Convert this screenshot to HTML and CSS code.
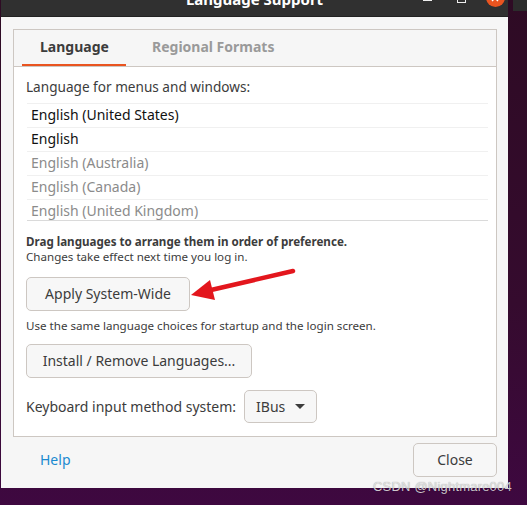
FILE: index.html
```html
<!DOCTYPE html>
<html>
<head>
<meta charset="utf-8">
<link rel="stylesheet" href="styles.css">
</head>
<body>
<div class="window">
  <div class="titlebar">
    <div class="titlebar-inner">
      <div></div>
      <div class="title">Language Support</div>
      <div class="controls">
        <span class="ctl"><span class="min"></span></span>
        <span class="ctl"><span class="max"></span></span>
        <span class="ctl"><span class="close"><svg width="18" height="18" viewBox="0 0 18 18"><path d="M6 6 L12 12 M12 6 L6 12" stroke="#fff" stroke-width="1.4" fill="none"/></svg></span></span>
      </div>
    </div>
  </div>
  <div class="body">
    <div class="notebook">
      <div class="tabs">
        <div class="tab active">Language</div>
        <div class="tab">Regional Formats</div>
      </div>
      <div class="page">
        <div class="label">Language for menus and windows:</div>
        <div class="list">
          <div class="row strong">English (United States)</div>
          <div class="row strong">English</div>
          <div class="row dim">English (Australia)</div>
          <div class="row dim">English (Canada)</div>
          <div class="row dim">English (United Kingdom)</div>
        </div>
        <div class="note bold first">Drag languages to arrange them in order of preference.</div>
        <div class="note">Changes take effect next time you log in.</div>
        <div class="btn apply">Apply System-Wide</div>
        <div class="note use">Use the same language choices for startup and the login screen.</div>
        <div class="btn install">Install / Remove Languages...</div>
        <div class="kbd-row">
          <span class="label-kbd">Keyboard input method system:</span>
          <div class="combo"><span>IBus</span><span class="caret"></span></div>
        </div>
      </div>
    </div>
    <div class="footer">
      <span class="help">Help</span>
      <div class="btn close-btn">Close</div>
    </div>
  </div>
</div>
<svg class="arrow" width="527" height="505" viewBox="0 0 527 505">
  <path d="M293 271 L211 290" stroke="#e3161d" stroke-width="4.5" stroke-linecap="round" fill="none"/>
  <polygon points="191,295 210,280 215,300" fill="#e3161d"/>
</svg>
<div class="watermark">CSDN @Nightmare004</div>
</body>
</html>
```
FILE: styles.css
```css
* { box-sizing: border-box; }
html, body { margin: 0; padding: 0; }
body {
  width: 527px;
  height: 505px;
  overflow: hidden;
  position: relative;
  font-family: "Noto Sans", "DejaVu Sans", sans-serif;
  background:
    linear-gradient(#2c2c2c, #2c2c2c) no-repeat right top / 14px 11px,
    linear-gradient(to bottom, #2e0b24 0%, #350b2e 60%, #3e0840 100%);
}
.window {
  margin-left: 1px;
  width: 507px;
  height: 488px;
  background: #f6f6f6;
  display: flex;
  flex-direction: column;
}
.titlebar {
  height: 17px;
  background: #303030;
  border-bottom: 1px solid #222;
  overflow: hidden;
}
.titlebar-inner {
  margin-top: -19px;
  height: 35px;
  display: grid;
  grid-template-columns: 1fr auto 1fr;
  align-items: center;
}
.title {
  color: #ffffff;
  font-weight: bold;
  font-size: 15px;
  line-height: 20px;
}
.controls {
  display: flex;
  justify-content: flex-end;
  gap: 8px;
  align-items: center;
}
.ctl {
  width: 26px;
  height: 26px;
  display: flex;
  align-items: center;
  justify-content: center;
}
.min { width: 9px; height: 1px; background: #eee; margin-top: 4px; }
.max { width: 9px; height: 9px; border: 1px solid #eee; margin-top: 0px; }
.close {
  width: 19px; height: 19px; border-radius: 50%;
  background: #e95420;
  display: flex; align-items: center; justify-content: center;
  margin-top: -2px;
}
.body {
  padding: 12px 11px 0 12px;
}
.notebook {
  width: 484px;
  height: 408px;
  border: 1px solid #cdc7c2;
  display: flex;
  flex-direction: column;
}
.tabs {
  height: 37px;
  border-bottom: 1px solid #cdc7c2;
  display: flex;
  padding-left: 8px;
  background: #f6f6f6;
}
.tab {
  height: 36px;
  line-height: 34px;
  padding: 0 18px 0 18px;
  font-size: 14px;
  font-weight: bold;
  color: #9a9a9a;
  border-bottom: 2px solid transparent;
  margin-right: 8px;
}
.tab.active {
  color: #3c3c3c;
  border-bottom-color: #e95420;
  width: 104px;
}
.page {
  flex: 1;
  background: #ffffff;
  padding: 11px 8px 0 12px;
  color: #3c3c3c;
  font-size: 14px;
}
.label { line-height: 18px; font-size: 13.6px; }
.list {
  margin: 7px 0 0 1px;
  width: 461px;
  height: 118px;
  overflow: hidden;
  border-bottom: 1px solid #dadada;
}
.row {
  height: 24px;
  border-top: 1px solid #f0f0f0;
  line-height: 21px;
  padding-left: 4px;
}
.row.strong { color: #111; }
.row.dim { color: #8b8b8b; }
.note { font-size: 11.6px; line-height: 15px; }
.note.bold { font-weight: bold; }
.note.first { margin-top: 13px; }
.note.use { margin-top: 7px; }
.btn {
  display: inline-block;
  height: 34px;
  line-height: 32px;
  border: 1px solid #cdc7c2;
  border-radius: 5px;
  background: #f7f7f7;
  color: #3c3c3c;
  font-size: 14px;
  text-align: center;
}
.apply { width: 164px; margin-top: 13px; display: block; }
.install { width: 226px; margin-top: 11px; display: block; }
.kbd-row {
  margin-top: 12px;
  display: flex;
  align-items: center;
  gap: 8px;
}
.combo {
  width: 73px;
  height: 33px;
  border: 1px solid #cdc7c2;
  border-radius: 5px;
  background: #f7f7f7;
  display: flex;
  align-items: center;
  padding-left: 11px;
  gap: 10px;
}
.caret {
  width: 0; height: 0;
  border-left: 5px solid transparent;
  border-right: 5px solid transparent;
  border-top: 5px solid #3c3c3c;
}
.footer {
  display: flex;
  justify-content: space-between;
  align-items: center;
  margin-top: 6px;
  width: 485px;
}
.help {
  margin-left: 27px;
  color: #1b8ad0;
  font-size: 14px;
  margin-top: -2px;
}
.close-btn { width: 84px; margin-right: 1px; }
.arrow {
  position: absolute;
  left: 0; top: 0;
  pointer-events: none;
}
.watermark {
  position: absolute;
  left: 373px;
  top: 479px;
  font-family: "Liberation Sans", sans-serif;
  font-size: 13px;
  color: rgba(235, 235, 235, 0.85);
  text-shadow: 0 0 1px rgba(0,0,0,0.4);
  letter-spacing: 0.2px;
}
```
